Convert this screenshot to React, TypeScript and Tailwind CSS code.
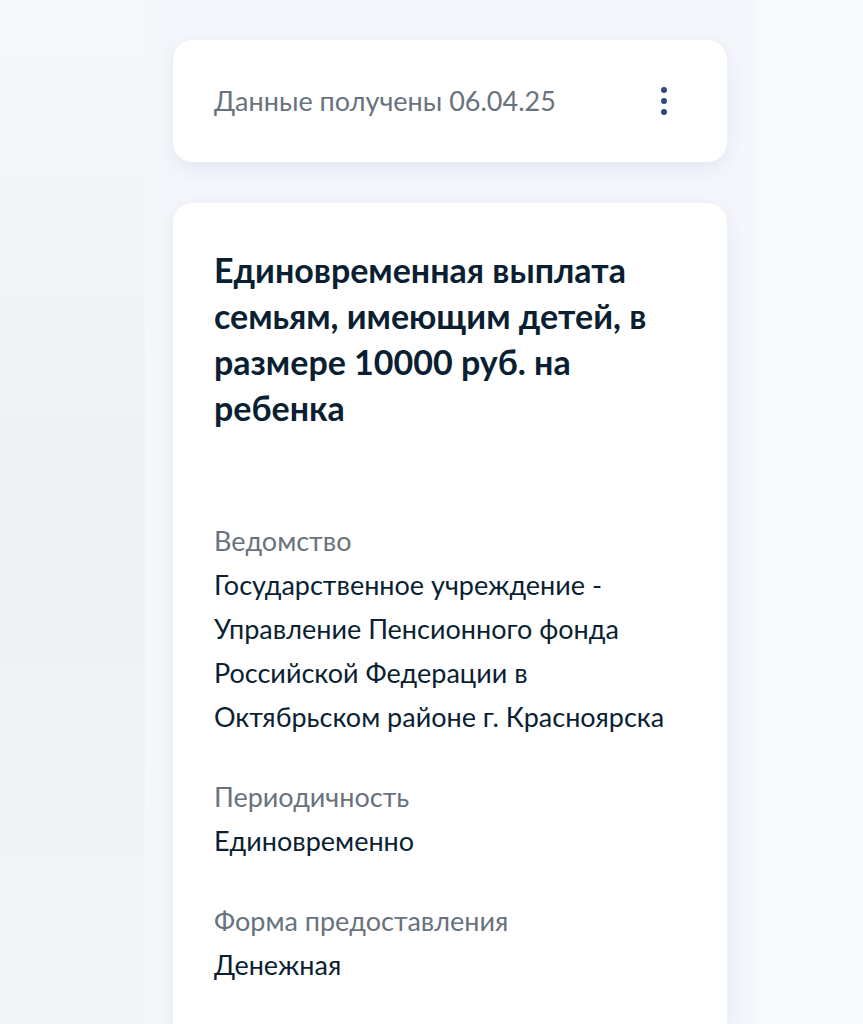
const font = { fontFamily: "Lato, 'Noto Sans', sans-serif" };

function Field({ label, children, className = "" }: { label: string; children: React.ReactNode; className?: string }) {
  return (
    <div className={className}>
      <div className="text-[27px] leading-[44px] text-[#68737e]">{label}</div>
      <div className="text-[27px] leading-[44px] text-[#0b1f33]">{children}</div>
    </div>
  );
}

export default function App() {
  return (
    <div className="min-h-screen w-full flex bg-[#f2f3f6]" style={font}>
      <div className="w-[145px] shrink-0 bg-gradient-to-b from-[#f7f8fa] via-[#eef0f3] to-[#f4f5f8]" />

      <div className="w-[610px] shrink-0 bg-[#f4f6fb] px-[28px] pt-[40px] flex flex-col gap-[41px]">
        {/* date card */}
        <div className="h-[122px] bg-white rounded-[20px] shadow-[0_6px_18px_rgba(30,60,120,0.08)] flex items-center justify-between pl-[41px] pr-[60px]">
          <span className="text-[27px] text-[#68737e]">Данные получены 06.04.25</span>
          <div className="flex flex-col gap-[5px]">
            <span className="w-[6px] h-[6px] rounded-full bg-[#2c4a7c]" />
            <span className="w-[6px] h-[6px] rounded-full bg-[#2c4a7c]" />
            <span className="w-[6px] h-[6px] rounded-full bg-[#2c4a7c]" />
          </div>
        </div>

        {/* payment card */}
        <div className="flex-1 bg-white rounded-t-[20px] shadow-[0_6px_18px_rgba(30,60,120,0.08)] pl-[41px] pr-[40px] pt-[44px] pb-[40px]">
          <h1 className="text-[34px] font-bold leading-[46px] text-[#0b1f33]">
            Единовременная выплата
            <br />
            семьям, имеющим детей, в
            <br />
            размере 10000 руб. на
            <br />
            ребенка
          </h1>

          <Field className="mt-[88px]" label="Ведомство">
            Государственное учреждение -
            <br />
            Управление Пенсионного фонда
            <br />
            Российской Федерации в
            <br />
            Октябрьском районе г. Красноярска
          </Field>

          <Field className="mt-[36px]" label="Периодичность">
            Единовременно
          </Field>

          <Field className="mt-[36px]" label="Форма предоставления">
            Денежная
          </Field>
        </div>
      </div>

      <div className="flex-1 bg-[#f8f9fb]" />
    </div>
  );
}
